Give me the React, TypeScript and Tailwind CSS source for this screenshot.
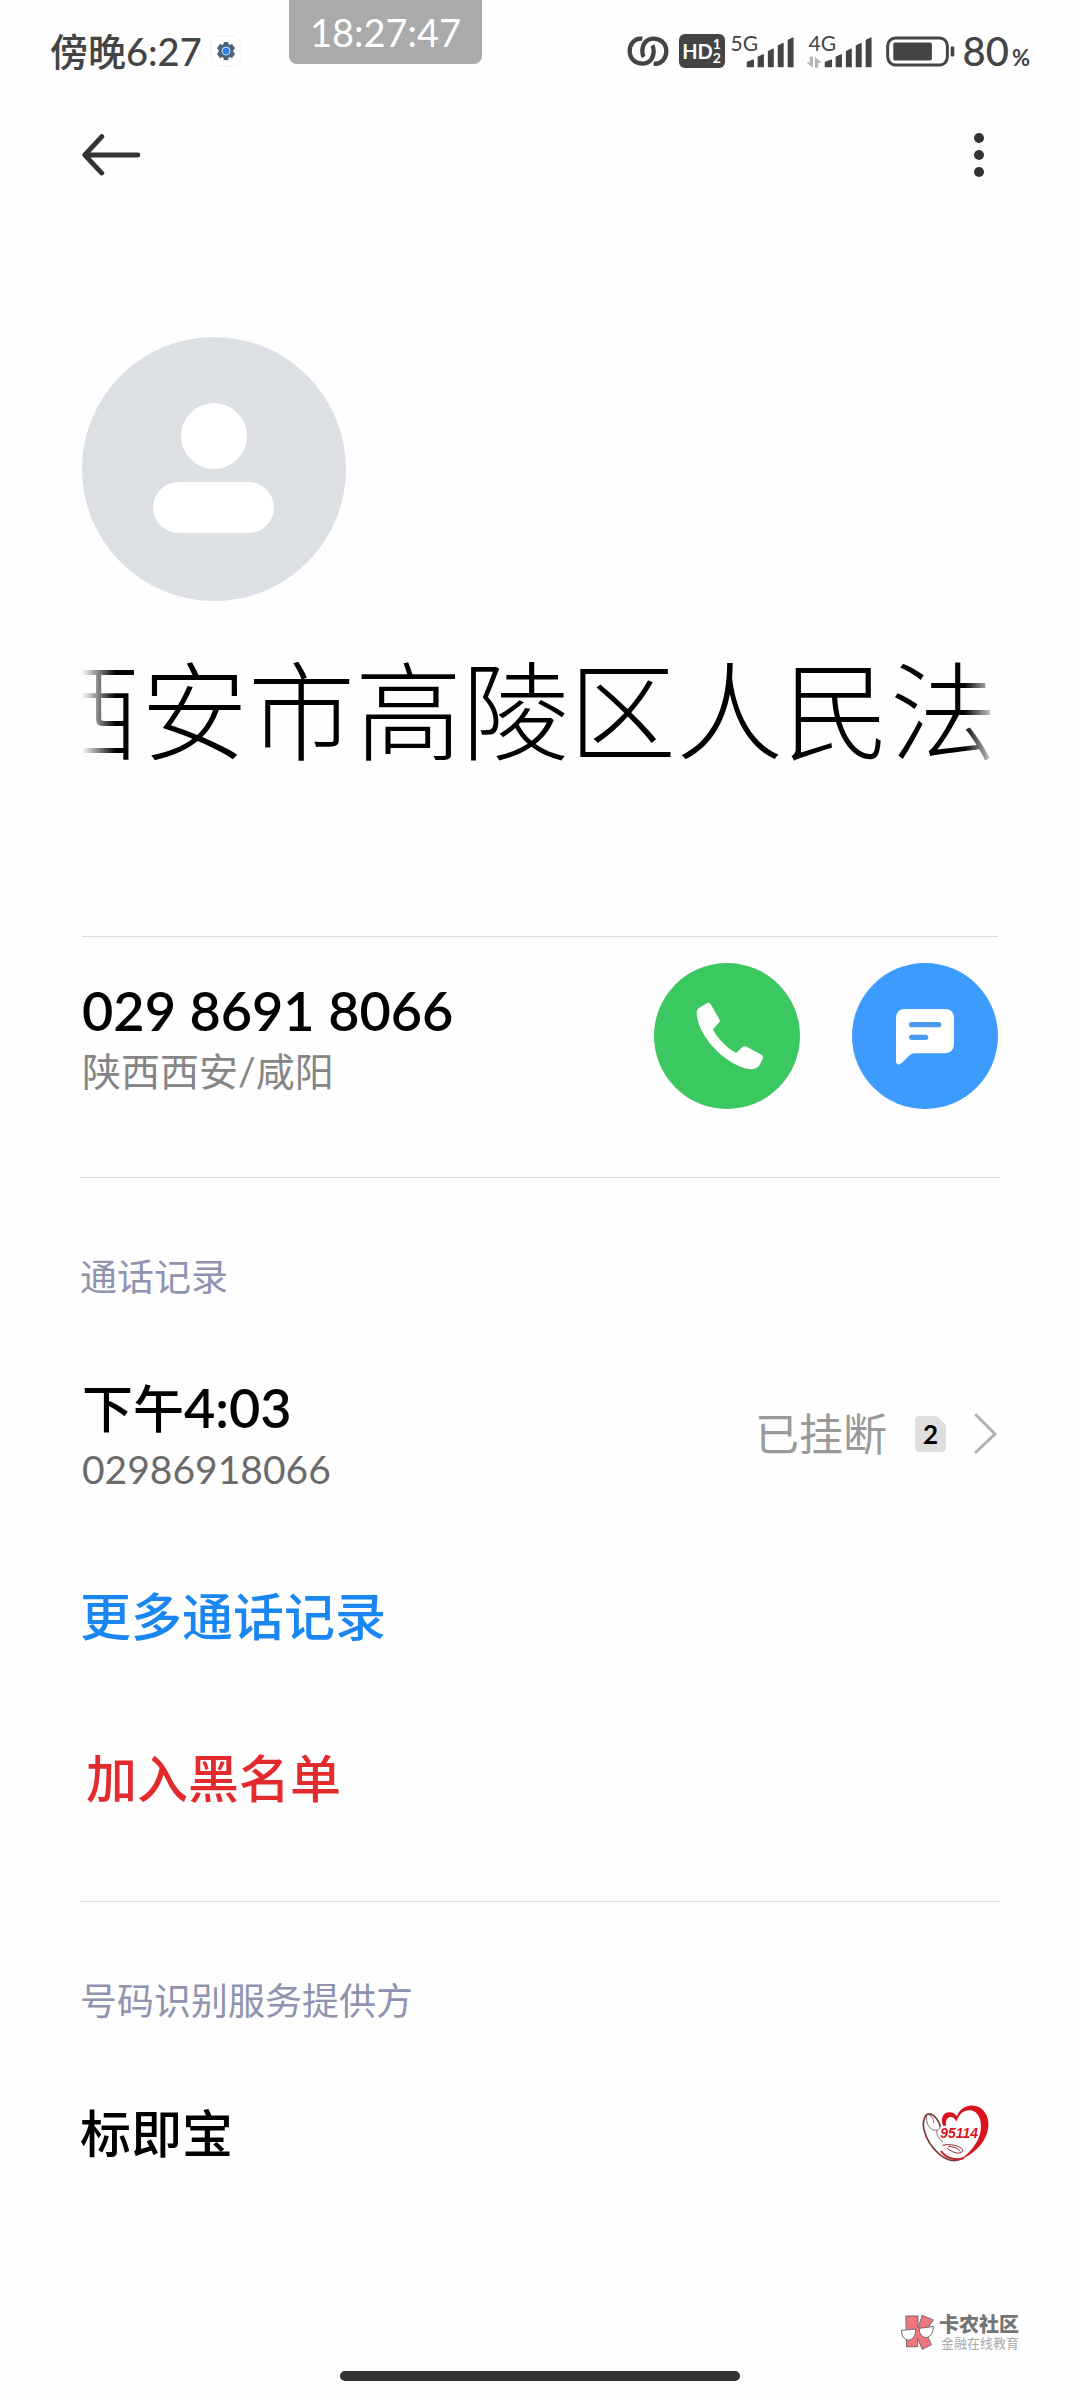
import type { ReactNode } from 'react'

type SignalProps = {
  label: string
  hasTraffic?: boolean
}

function LinkedRings() {
  return (
    <svg viewBox="78 103 126 99" className="h-[33px] w-[42px] shrink-0" fill="none" stroke="#444" strokeWidth="13">
      <path d="M124 114C99 111 86 132 86 151C86 176 105 189 124 189C147 189 158 171 158 152C158 145 157 139 154 134" />
      <path d="M158 189C183 192 196 171 196 152C196 127 177 114 158 114C135 114 124 132 124 151C124 158 125 164 128 169" />
    </svg>
  )
}

function HdBadge() {
  return (
    <div className="flex h-[34px] w-[46px] shrink-0 items-center justify-center rounded-md bg-[#444] font-bold text-white">
      <span className="text-[20px] leading-none">HD</span>
      <span className="flex flex-col text-[14px] leading-[14px]">
        <span>1</span>
        <span>2</span>
      </span>
    </div>
  )
}

function Signal({ label, hasTraffic = false }: SignalProps) {
  return (
    <div className="relative flex h-[34px] w-[66px] shrink-0 items-end justify-end">
      <span className="absolute top-0 left-[3px] text-[21px] leading-[17px] text-[#444]">{label}</span>
      {hasTraffic && (
        <svg viewBox="615 163 48 37" className="absolute bottom-0 left-0 h-[12px] w-[16px]" fill="#b5b5b5">
          <path d="M626 165H636V199L615 182H626ZM642 165L663 184H652V199H642Z" />
        </svg>
      )}
      <svg viewBox="434 106 145 97" className="h-[32px] w-[48px]" fill="#444" stroke="#444" strokeWidth="4" strokeLinejoin="round">
        <path d="M438 186L456 179V199H438ZM471 170L486 163V199H471ZM502 153L516 146V199H502ZM532 136L546 129V199H532ZM562 119L576 112V199H562Z" />
      </svg>
    </div>
  )
}

function Battery() {
  return (
    <svg viewBox="858 106 207 94" className="h-[31px] w-[69px] shrink-0" fill="#444">
      <rect x="862" y="112" width="181" height="82" rx="24" fill="none" stroke="#444" strokeWidth="9" />
      <rect x="879" y="126" width="117" height="54" rx="5" />
      <rect x="1053" y="138" width="11" height="30" rx="4" />
    </svg>
  )
}

function SettingsAppIcon() {
  return (
    <svg viewBox="0 0 32 32" className="size-8 shrink-0">
      <rect x="1" y="1" width="30" height="30" rx="9" fill="#fff" stroke="#f3f3f6" />
      <path d="M8 22A10 10 0 0 0 25 20" fill="none" stroke="#e6e2ef" />
      <path
        d="M14 7H18L19 10L22 9L25 13L23 16L25 19L22 23L19 22L18 25H14L13 22L10 23L7 19L9 16L7 13L10 9L13 10Z"
        fill="#4b6478"
      />
      <circle cx="16" cy="16" r="4" fill="#2f7de0" stroke="#c6e2fb" />
    </svg>
  )
}

function StatusBar() {
  return (
    <div className="relative flex h-[102px] items-center justify-between px-[50px] text-[#444]">
      <div className="flex items-center gap-2">
        <span className="text-[38px] leading-none font-medium">傍晚6:27</span>
        <SettingsAppIcon />
      </div>
      <div className="absolute top-0 left-[289px] flex h-16 w-[193px] items-center justify-center rounded-b-lg bg-[#aaa] text-[38px] leading-none text-white">
        18:27:47
      </div>
      <div className="flex items-center">
        <LinkedRings />
        <div className="ml-[10px] flex items-center gap-[3px]">
          <HdBadge />
          <Signal label="5G" />
        </div>
        <div className="ml-3 flex items-center gap-[14px]">
          <Signal label="4G" hasTraffic />
          <Battery />
        </div>
        <span className="ml-2 flex items-baseline gap-[3px] leading-none font-medium">
          <span className="text-[40px]">80</span>
          <span className="text-[22px] font-bold">%</span>
        </span>
      </div>
    </div>
  )
}

function TopBar() {
  return (
    <header className="flex h-[106px] items-center justify-between px-[82px]">
      <button type="button" aria-label="返回" className="flex h-16 w-[60px] items-center">
        <svg
          viewBox="240 403 170 126"
          className="h-[44px] w-[59px]"
          fill="none"
          stroke="#333"
          strokeWidth="14"
          strokeLinecap="round"
          strokeLinejoin="round"
        >
          <path d="M297 413L248 466L297 518M248 466H401" />
        </svg>
      </button>
      <button type="button" aria-label="更多选项" className="flex h-16 w-[38px] items-center justify-center">
        <svg viewBox="0 0 10 46" className="h-[46px] w-[10px]" fill="#333">
          <circle cx="5" cy="6" r="5" />
          <circle cx="5" cy="23" r="5" />
          <circle cx="5" cy="40" r="5" />
        </svg>
      </button>
    </header>
  )
}

function Avatar() {
  return (
    <svg viewBox="0 0 264 264" className="size-[264px]" aria-label="头像">
      <circle cx="132" cy="132" r="132" fill="#dcdfe4" />
      <circle cx="132" cy="99" r="33" fill="#fff" />
      <rect x="71" y="145" width="121" height="51" rx="25.5" fill="#fff" />
    </svg>
  )
}

function RoundButton({ label, className, children }: { label: string; className: string; children: ReactNode }) {
  return (
    <button type="button" aria-label={label} className={`size-[146px] shrink-0 rounded-full ${className}`}>
      {children}
    </button>
  )
}

function SimBadge() {
  return (
    <span className="relative flex h-9 w-[31px] items-center justify-center">
      <svg viewBox="0 0 31 36" className="absolute inset-0 size-full" fill="#dedede">
        <path d="M5 0H20Q22 0 23.500 1.500L29 7Q31 9 31 11V31Q31 36 26 36H5Q0 36 0 31V5Q0 0 5 0Z" />
      </svg>
      <span className="relative text-[26px] leading-none font-bold text-black">2</span>
    </span>
  )
}

function HeartLogo() {
  return (
    <svg viewBox="120 65 220 190" className="h-[63px] w-[73px]" aria-label="95114">
      <path
        d="M192 137C184 112 194 96 210 96C222 95 230 101 234 108C244 80 270 71 292 77C324 86 336 122 326 156C316 194 278 226 246 237C274 218 302 184 306 150C310 116 298 94 276 90C254 88 240 102 233 124C226 112 218 108 210 112C202 116 200 126 202 137Z"
        fill="#d9141e"
      />
      <path d="M250 235C206 260 148 204 135 148C129 120 140 98 152 101C166 103 182 122 184 140" fill="none" stroke="#7a3a3c" strokeWidth="5" />
      <path d="M186 213C204 236 232 243 256 234" fill="none" stroke="#c3232b" strokeWidth="6" />
      <path d="M143 106C140 128 150 146 166 150C180 152 186 142 184 132M148 104C160 106 166 120 164 128M174 150C172 164 180 176 192 186" fill="none" stroke="#8f6062" strokeWidth="3" />
      <path d="M190 196C212 190 244 196 252 210C250 224 226 222 204 204M208 200C222 198 240 206 244 214" fill="none" stroke="#8a2a2e" strokeWidth="3" />
      <text x="184" y="173" fill="#d9141e" fontFamily="Liberation Sans, sans-serif" fontSize="42" fontWeight="700" fontStyle="italic">
        95114
      </text>
    </svg>
  )
}

function Watermark() {
  return (
    <div className="flex items-center gap-1">
      <svg viewBox="56 66 108 110" className="size-9" stroke="#6b6b6b" strokeWidth="3" strokeLinejoin="round">
        <path d="M76 72H113V108L126 70L160 84L136 120L154 160L126 174L112 140V166H78Z" fill="#f2747f" />
        <path d="M62 116L106 112Q106 144 84 146Q64 144 62 116ZM116 110L160 104Q160 132 140 138Q118 138 116 110Z" fill="#fff" />
      </svg>
      <div className="flex flex-col items-end">
        <span className="text-[20px] leading-[22px] font-black text-[#757575]">卡农社区</span>
        <span className="text-[13px] leading-4 text-[#aaa]">金融在线教育</span>
      </div>
    </div>
  )
}

function Divider() {
  return <hr className="border-t border-[#dedede]" />
}

export default function App() {
  return (
    <div className="flex min-h-screen flex-col bg-[#fefefe] font-[Lato,'Noto_Sans_CJK_SC',sans-serif] text-black">
      <StatusBar />
      <TopBar />

      <main className="flex-1 px-20">
        <section className="px-0.5 pt-[129px]">
          <Avatar />
          <h1 className="-mx-12 mt-8 mb-[147px] text-[107px] leading-[156px] font-light whitespace-nowrap [mask-image:linear-gradient(to_right,transparent_48px,black_82px,black_calc(100%-82px),transparent_calc(100%-48px))]">
            西安市高陵区人民法
          </h1>
          <Divider />
          <div className="flex items-center justify-between pt-[26px] pb-[68px]">
            <div className="pt-2.5">
              <p className="text-[54px] leading-[60px] font-semibold">029 8691 8066</p>
              <p className="text-[39px] leading-[60px] text-[#858585]">陕西西安/咸阳</p>
            </div>
            <div className="flex gap-[52px]">
              <RoundButton label="拨打电话" className="bg-[#3cc860]">
                <svg viewBox="162 129 438 438" fill="#fff">
                  <path d="M298 263L318 251Q328 245 333 254L358 298Q361 303 356 309L339 328C352 355 380 384 408 399L427 382Q433 377 440 380L482 403Q492 408 488 417L480 433C473 446 462 449 448 447C380 437 300 355 291 290C289 275 290 269 298 263Z" />
                </svg>
              </RoundButton>
              <RoundButton label="发送短信" className="bg-[#3d9bff]">
                <svg viewBox="756 129 438 438" fill="#fff">
                  <path d="M916 267H1034Q1062 267 1062 295V370Q1062 400 1032 400H942Q935 400 929 406L905 429Q898 436 891 432Q888 430 888 424V295Q888 267 916 267Z" />
                  <path d="M935 314H1016M935 352H977" stroke="#4a9bed" strokeWidth="16" strokeLinecap="round" />
                </svg>
              </RoundButton>
            </div>
          </div>
        </section>

        <section>
          <Divider />
          <h2 className="pt-[69px] text-[37px] leading-[60px] text-[#9093b0]">通话记录</h2>
          <button type="button" className="mt-[71px] flex w-full items-center justify-between px-0.5 text-left">
            <span className="flex flex-col">
              <span className="text-[51px] leading-[60px] font-medium">
                下午<span className="text-[54px] font-semibold">4:03</span>
              </span>
              <span className="text-[39px] leading-[60px] text-[#6b6b6b]">02986918066</span>
            </span>
            <span className="flex items-center gap-7 pb-2.5">
              <span className="text-[44px] leading-[60px] text-[#999]">已挂断</span>
              <SimBadge />
              <svg
                viewBox="0 0 24 42"
                className="h-[42px] w-6"
                fill="none"
                stroke="#b0b0b0"
                strokeWidth="3"
                strokeLinecap="round"
                strokeLinejoin="round"
              >
                <path d="M2 2L21 21L2 39" />
              </svg>
            </span>
          </button>
          <a href="#calls" className="mt-[88px] block text-[51px] leading-[60px] font-medium text-[#1a86f2]">
            更多通话记录
          </a>
          <button type="button" className="mt-[102px] mb-[92px] block px-1.5 text-[51px] leading-[60px] font-medium text-[#e32b2e]">
            加入黑名单
          </button>
        </section>

        <section>
          <Divider />
          <h2 className="pt-[69px] text-[37px] leading-[60px] text-[#9093b0]">号码识别服务提供方</h2>
          <div className="mt-[71px] flex items-center justify-between pr-2">
            <p className="text-[51px] leading-[60px] font-medium">标即宝</p>
            <HeartLogo />
          </div>
        </section>
      </main>

      <footer className="flex flex-col items-center gap-5 pb-[19px]">
        <div className="flex w-full justify-end pr-[61px]">
          <Watermark />
        </div>
        <div className="h-2.5 w-[400px] rounded-full bg-[#333]" />
      </footer>
    </div>
  )
}
